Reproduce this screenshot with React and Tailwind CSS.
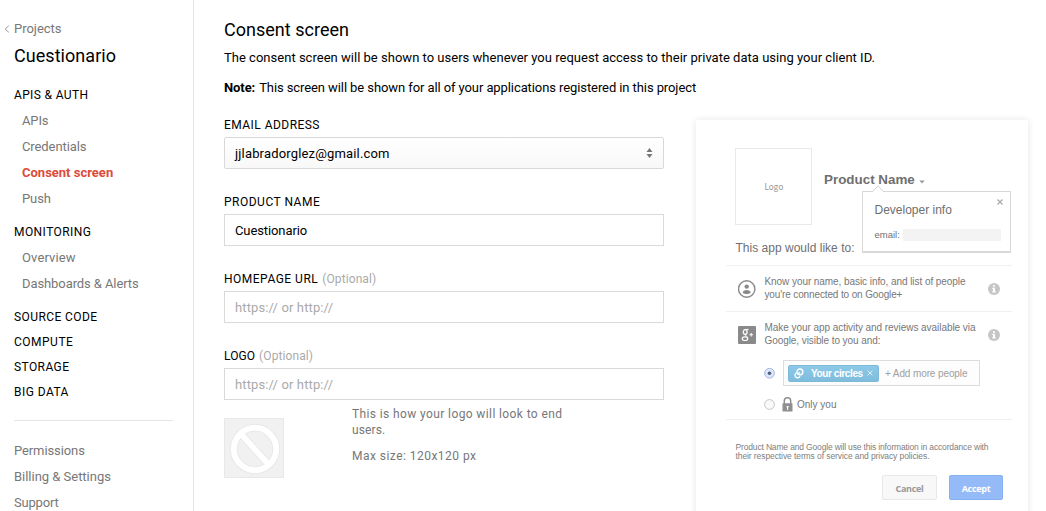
import React from "react";

const heading = "flex h-[25px] shrink-0 items-center text-[12px] text-black whitespace-nowrap";
const item = "flex h-[26px] shrink-0 items-center pt-px text-[13px] text-[#777] whitespace-nowrap";

function Sidebar() {
  return (
    <nav className="flex h-[511px] w-[194px] shrink-0 flex-col overflow-hidden border-r border-[#e5e5e5] pt-[15px] pl-[14px]">
      <div className={`${item} relative tracking-[-0.025px]`}>
        <svg className="absolute top-[10px] left-[-10px]" width="6" height="8" viewBox="0 0 6 8">
          <path d="M4.8 0.7 1.2 4l3.6 3.3" fill="none" stroke="#999" strokeWidth="1" />
        </svg>
        Projects
      </div>
      <div className="mt-0.5 flex h-[26px] shrink-0 items-center pb-0.5 text-[18px] tracking-[0.047px]">Cuestionario</div>
      <div className={`${heading} mt-[13px] tracking-[0.356px]`}>APIS &amp; AUTH</div>
      <div className="shrink-0 pl-2">
        <div className={`${item} tracking-[-0.14px]`}>APIs</div>
        <div className={`${item} tracking-[-0.09px]`}>Credentials</div>
        <div className="flex h-[26px] items-center pt-px text-[13px] font-bold whitespace-nowrap text-[#dd4b39]">Consent screen</div>
        <div className={`${item} tracking-[-0.08px]`}>Push</div>
      </div>
      <div className={`${heading} mt-2 tracking-[0.441px]`}>MONITORING</div>
      <div className="shrink-0 pl-2">
        <div className={`${item} tracking-[0.114px]`}>Overview</div>
        <div className={`${item} tracking-[-0.09px]`}>Dashboards &amp; Alerts</div>
      </div>
      <div className={`${heading} mt-2 tracking-[0.406px]`}>SOURCE CODE</div>
      <div className={`${heading} tracking-[0.5px]`}>COMPUTE</div>
      <div className={`${heading} tracking-[0.411px]`}>STORAGE</div>
      <div className={`${heading} tracking-[0.45px]`}>BIG DATA</div>
      <hr className="mt-4 mb-4 w-[159px] shrink-0 border-[#e5e5e5]" />
      <div className={`${item} tracking-[-0.1px]`}>Permissions</div>
      <div className={`${item} tracking-[-0.02px]`}>Billing &amp; Settings</div>
      <div className={`${item} tracking-[-0.2px]`}>Support</div>
    </nav>
  );
}

function Field({ label, optional, tracking, children }) {
  return (
    <div className="mb-5">
      <div className="flex h-[25px] items-center gap-1 text-[12px] whitespace-nowrap">
        <span className={tracking}>{label}</span>
        {optional && <span className="tracking-[0.1px] text-[#aaa]">(Optional)</span>}
      </div>
      {children}
    </div>
  );
}

const box = "flex h-8 items-center border border-[#d9d9d9] px-2.5 pt-px text-[13px] whitespace-nowrap";

function Form() {
  return (
    <div className="w-[440px] shrink-0">
      <Field label="EMAIL ADDRESS" tracking="tracking-[0.46px]">
        <div className={`${box} justify-between rounded-[2px] bg-linear-to-b from-white to-[#f8f8f8] tracking-[0.168px]`}>
          jjlabradorglez@gmail.com
          <svg className="mb-0.5" width="7" height="10" viewBox="0 0 7 10" fill="#777">
            <path d="M3.5 0 6.5 4h-6zM3.5 10 .5 6h6z" />
          </svg>
        </div>
      </Field>
      <Field label="PRODUCT NAME" tracking="tracking-[0.5px]">
        <div className={`${box} tracking-[-0.1px]`}>Cuestionario</div>
      </Field>
      <Field label="HOMEPAGE URL" tracking="tracking-[0.5px]" optional>
        <div className={`${box} tracking-[0.121px] text-[#aaa]`}>https:// or http://</div>
      </Field>
      <Field label="LOGO" tracking="tracking-[0.07px]" optional>
        <div className={`${box} tracking-[0.121px] text-[#aaa]`}>https:// or http://</div>
        <div className="flex gap-[68px]">
          <div className="mt-[18px] size-[60px] border border-[#e8e8e8] bg-[#f1f1f1]">
            <svg width="58" height="58" viewBox="0 0 58 58" fill="none">
              <circle cx="30" cy="30" r="21.2" stroke="#e6e6e6" strokeWidth="7.6" />
              <path d="M16 15 44 46" stroke="#e6e6e6" strokeWidth="7.6" />
              <circle cx="30" cy="30" r="21.2" stroke="#fff" strokeWidth="6" />
              <path d="M16 15 44 46" stroke="#fff" strokeWidth="6" />
            </svg>
          </div>
          <div className="pt-[6px] text-[12px] leading-4 whitespace-nowrap text-[#777]">
            <div className="tracking-[0.389px]">This is how your logo will look to end</div>
            <div className="tracking-[0.1px]">users.</div>
            <div className="mt-[10px] tracking-[0.465px]">Max size: 120x120 px</div>
          </div>
        </div>
      </Field>
    </div>
  );
}

function Info() {
  return (
    <svg width="12" height="12" viewBox="0 0 12 12">
      <circle cx="6" cy="6" r="6" fill="#c6c6c6" />
      <path d="M5 2.2h2v1.6H5zM4.3 4.8H7v3.4h.8v1.2H4.2V8.2H5V6h-.7z" fill="#fff" />
    </svg>
  );
}

function Popover() {
  return (
    <div className="absolute top-[71px] left-[166px] h-[62px] w-[149px] border border-b-2 border-[#d8d8d8] bg-white pl-[11.5px] text-[#6f6f6f]">
      <svg className="absolute top-[-7px] left-[8px]" width="14" height="8" viewBox="0 0 14 8">
        <path d="M1 7 7 1l6 6v1H1z" fill="#fff" />
        <path d="M1 7 7 1l6 6" fill="none" stroke="#d4d4d4" />
      </svg>
      <svg className="absolute top-[7px] right-[7px]" width="6" height="6" viewBox="0 0 6 6">
        <path d="M.5.5l5 5m0-5-5 5" stroke="#aaa" strokeWidth="1.2" />
      </svg>
      <div className="pt-[11px] text-[12px] leading-[15px]">Developer info</div>
      <div className="mt-[11px] flex items-center gap-0.5 text-[9.5px] leading-3">
        email:
        <span className="ml-px h-3 w-[98px] bg-[#f3f3f3]" />
      </div>
    </div>
  );
}

function Preview() {
  return (
    <div className="relative ml-8 h-[420px] w-[332px] shrink-0 bg-white pt-[28px] pl-[30px] font-['Liberation_Sans',sans-serif] whitespace-nowrap text-[#777] shadow-[0_0_7px_rgba(0,0,0,0.1)]">
      <div className="flex pl-[9px]">
        <div className="flex h-[77px] w-[77px] items-center justify-center border border-[#e9e9e9] pt-0.5 pl-px font-['Lato',sans-serif] text-[8.5px] tracking-[0.3px] text-[#999]">
          Logo
        </div>
        <div className="mt-[24px] ml-3 flex h-4 items-center gap-1 text-[13.4px] font-bold text-[#6f6f6f]">
          Product Name
          <svg className="mt-[3px]" width="6" height="4" viewBox="0 0 6 4"><path d="M.3.5h5.4L3 3.5z" fill="#999" /></svg>
        </div>
      </div>
      <div className="mt-[15px] flex h-4 items-center pl-[9.5px] text-[12px] tracking-[0.012px] text-[#6f6f6f]">This app would like to:</div>
      <div className="mt-[9px] flex h-[46px] w-[286px] items-center border-t border-[#f1f1f1] pl-[11.5px]">
        <svg width="18" height="18" viewBox="0 0 18 18">
          <circle cx="8.7" cy="9" r="8.2" fill="none" stroke="#8a8a8a" strokeWidth="1.4" />
          <circle cx="8.7" cy="6.6" r="2.2" fill="#8a8a8a" />
          <path d="M4.7 12.7c0-1.9 2-2.7 4-2.7s4 .8 4 2.7c-1.2.9-2.5 1.300-4 1.300s-2.800-.4-4-1.300z" fill="#8a8a8a" />
        </svg>
        <div className="ml-[9px] w-[223.5px] pb-px text-[10px] leading-[13.5px]">
          <div className="tracking-[-0.067px]">Know your name, basic info, and list of people</div>
          <div className="tracking-[-0.13px]">you're connected to on Google+</div>
        </div>
        <div className="pt-px"><Info /></div>
      </div>
      <div className="h-[109px] w-[286px] border-t border-b border-[#f1f1f1] pl-[11.5px]">
        <div className="flex h-[45px] items-center">
          <svg width="18" height="18" viewBox="0 0 18 18">
            <rect width="18" height="18" rx="1" fill="#8a8a8a" />
            <g fill="none" stroke="#fff">
              <ellipse cx="7.2" cy="6" rx="1.9" ry="2.4" strokeWidth="1.3" />
              <path d="M7.6 3.4h3M8.2 8.3c-2.2 1.2.2 1.5 1.1 2.4" strokeWidth="1" />
              <ellipse cx="7" cy="12.7" rx="2.7" ry="1.8" strokeWidth="1.2" />
              <path d="M11.4 8.7h3.6M13.2 6.9v3.6" strokeWidth="1" />
            </g>
          </svg>
          <div className="ml-[9px] w-[223.5px] pb-px text-[10px] leading-[13.5px]">
            <div className="tracking-[-0.052px]">Make your app activity and reviews available via</div>
            <div className="tracking-[-0.072px]">Google, visible to you and:</div>
          </div>
          <div className="pt-px"><Info /></div>
        </div>
        <div className="mt-[3px] flex items-center pl-[26.5px]">
          <svg width="11" height="11" viewBox="0 0 11 11">
            <circle cx="5.5" cy="5.2" r="4.9" fill="#dce8fa" stroke="#a3b7dc" />
            <circle cx="5.5" cy="5.2" r="1.8" fill="#4f5f7d" />
          </svg>
          <div className="ml-[8px] flex h-[26px] w-[197px] items-center border border-[#dcdcdc] bg-[#fdfdfd] pl-1">
            <div className="flex h-[17px] w-[91px] items-center rounded-[2px] border border-[#7db9d8] bg-linear-to-b from-[#8cc9e8] to-[#80bddc] pl-1 text-white">
              <svg width="11" height="11" viewBox="0 0 11 11" fill="none" stroke="#fff" strokeWidth="1.4">
                <circle cx="6.9" cy="3.9" r="2.9" />
                <path d="M3.6 4.8a2.6 2.6 0 1 0 3.4 3.4" />
                <path d="M5 6.3 6.8 4.2" />
              </svg>
              <span className="ml-[7px] text-[10px] font-bold tracking-[-0.4px]">Your circles</span>
              <svg className="ml-[4px]" width="6" height="6" viewBox="0 0 6 6"><path d="M.6.6l4.8 4.8m0-4.8L.6 5.4" stroke="#d8eef9" /></svg>
            </div>
            <span className="ml-1.5 text-[10px] tracking-[-0.11px] text-[#a0a0a0]">+ Add more people</span>
          </div>
        </div>
        <div className="mt-[11px] flex items-center pl-[26.5px]">
          <svg width="11" height="11" viewBox="0 0 11 11">
            <circle cx="5.5" cy="5.5" r="4.9" fill="#fafafa" stroke="#c4c4c4" />
          </svg>
          <svg className="ml-[7px]" width="11" height="15" viewBox="0 0 11 15">
            <path d="M2.3 7V4a3.2 3.2 0 0 1 6.4 0v3" fill="none" stroke="#8f8f8f" strokeWidth="1.5" />
            <rect x=".5" y="6.2" width="10" height="8.4" rx=".6" fill="#8f8f8f" />
            <path d="M4.6 9h2v1.4h-.5V13h-1v-2.6h-.5z" fill="#fff" />
          </svg>
          <span className="ml-1 text-[10px] leading-[15px]">Only you</span>
        </div>
      </div>
      <div className="mt-[23px] pl-[9.5px] text-[8.5px] leading-[9px] text-[#808080]">
        <div className="tracking-[-0.158px]">Product Name and Google will use this information in accordance with</div>
        <div className="tracking-[-0.09px]">their respective terms of service and privacy policies.</div>
      </div>
      <div className="mt-[14px] flex gap-3 pl-[156px] font-['Open_Sans',sans-serif] text-[9px] font-bold tracking-[-0.3px]">
        <div className="flex h-[25px] w-[55px] items-center justify-center rounded-[2px] border border-[#e8e8e8] bg-[#f8f8f8] pt-0.5 text-[#999]">Cancel</div>
        <div className="flex h-[25px] w-[54px] items-center justify-center rounded-[2px] border border-[#85b0f2] bg-[#94bbf8] pt-0.5 text-white">Accept</div>
      </div>
      <Popover />
    </div>
  );
}

export default function App() {
  return (
    <div className="flex h-[511px] w-[1046px] overflow-hidden bg-white font-['Roboto',sans-serif] text-black">
      <Sidebar />
      <main className="min-w-0 flex-1 pt-4 pl-[30px]">
        <h1 className="flex h-7 items-center pb-0.5 text-[18px] tracking-[0.02px]">Consent screen</h1>
        <p className="mt-1 h-5 text-[13px] leading-5 tracking-[0.016px] whitespace-nowrap">
          The consent screen will be shown to users whenever you request access to their private data using your client ID.
        </p>
        <p className="mt-[10px] flex h-5 gap-1 text-[13px] leading-5 tracking-[-0.089px] whitespace-nowrap">
          <b className="font-bold">Note:</b>
          <span>This screen will be shown for all of your applications registered in this project</span>
        </p>
        <div className="mt-[14px] flex">
          <Form />
          <div className="pt-2">
            <Preview />
          </div>
        </div>
      </main>
    </div>
  );
}
